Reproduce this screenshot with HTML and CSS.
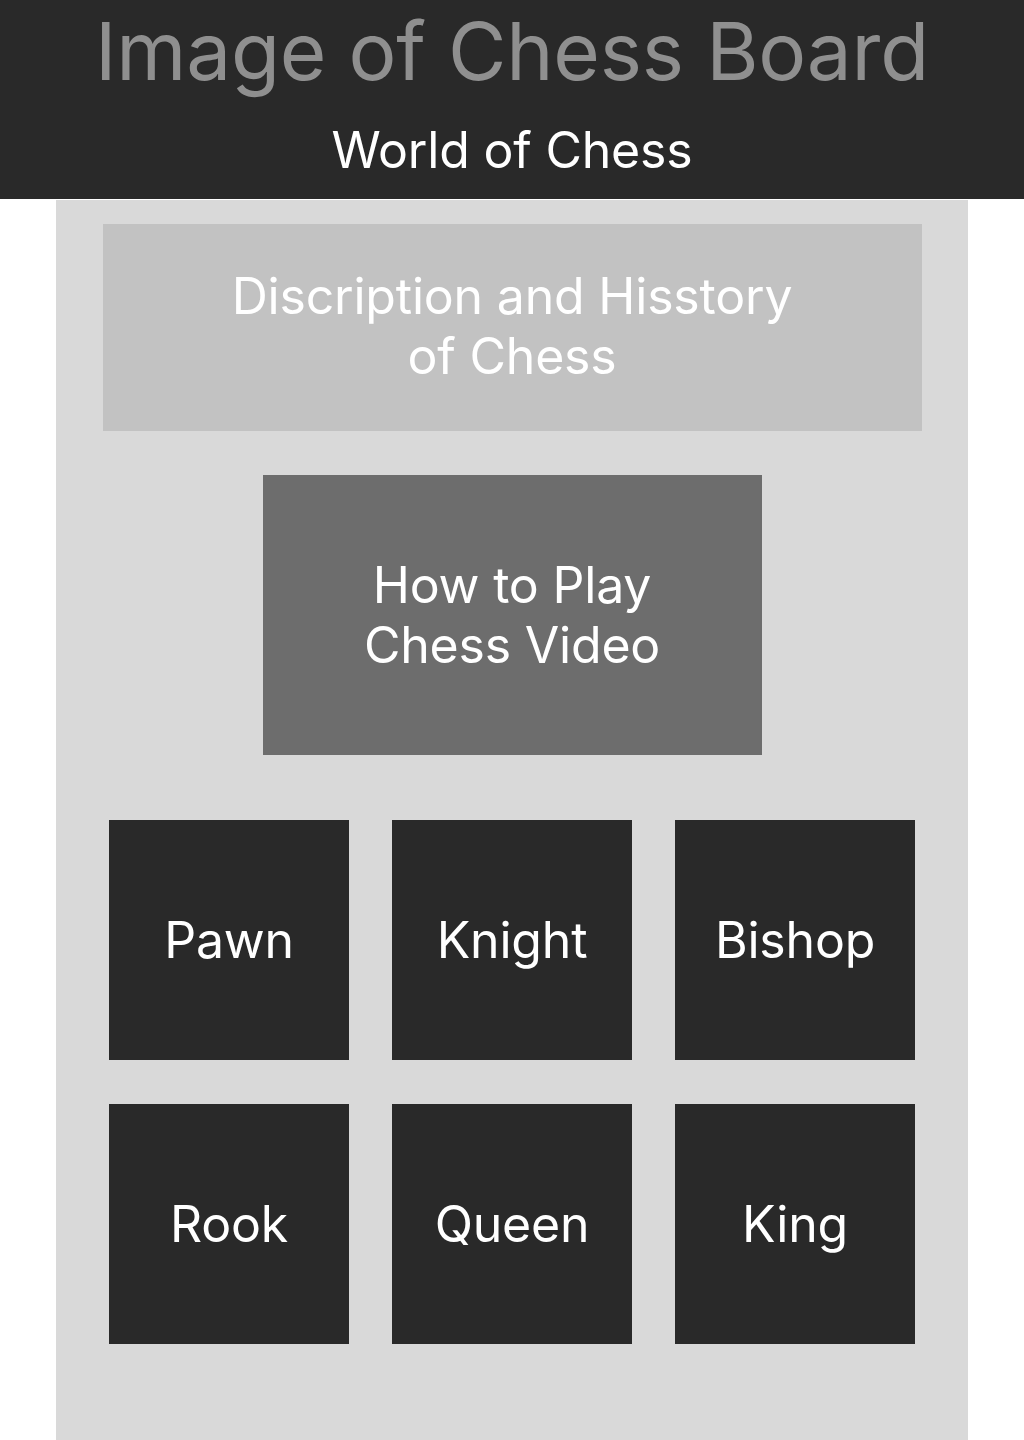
FILE: index.html
```html
<!DOCTYPE html>
<html lang="en">
<head>
<meta charset="utf-8">
<title>World of Chess</title>
<link rel="stylesheet" href="styles.css">
</head>
<body>
<header class="site-header">
  <h1 class="site-title">Image of Chess Board</h1>
  <p class="site-subtitle">World of Chess</p>
</header>
<main class="content">
  <section class="description">Discription and Hisstory<br>of Chess</section>
  <section class="video">How to Play<br>Chess Video</section>
  <section class="pieces">
    <div class="piece">Pawn</div>
    <div class="piece">Knight</div>
    <div class="piece">Bishop</div>
    <div class="piece">Rook</div>
    <div class="piece">Queen</div>
    <div class="piece">King</div>
  </section>
</main>
</body>
</html>
```
FILE: styles.css
```css
html, body {
  margin: 0;
  padding: 0;
  background: #ffffff;
  font-family: Inter, "Noto Sans", "Liberation Sans", sans-serif;
  letter-spacing: -0.2px;
}

.site-header {
  background: #292929;
  height: 199px;
  box-sizing: border-box;
  padding-top: 2px;
  text-align: center;
}

.site-title {
  margin: 0;
  font-size: 80px;
  font-weight: 400;
  line-height: normal;
  color: #8f8f8f;
}

.site-subtitle {
  margin: 21px 0 0;
  font-size: 50px;
  line-height: normal;
  color: #ffffff;
}

.content {
  width: 912px;
  margin: 1px auto 0;
  background: #d9d9d9;
  padding: 24px 0 100px;
  display: flex;
  flex-direction: column;
  align-items: center;
}

.description {
  width: 819px;
  height: 207px;
  box-sizing: border-box;
  padding-bottom: 3px;
  background: #c2c2c2;
  color: #ffffff;
  font-size: 50px;
  line-height: normal;
  display: flex;
  align-items: center;
  justify-content: center;
  text-align: center;
}

.video {
  margin-top: 44px;
  width: 499px;
  height: 280px;
  background: #6d6d6d;
  color: #ffffff;
  font-size: 50px;
  line-height: normal;
  display: flex;
  align-items: center;
  justify-content: center;
  text-align: center;
}

.pieces {
  margin-top: 65px;
  display: grid;
  grid-template-columns: repeat(3, 240px);
  grid-auto-rows: 240px;
  column-gap: 43px;
  row-gap: 44px;
}

.piece {
  background: #292929;
  color: #ffffff;
  font-size: 50px;
  display: flex;
  align-items: center;
  justify-content: center;
}
```
